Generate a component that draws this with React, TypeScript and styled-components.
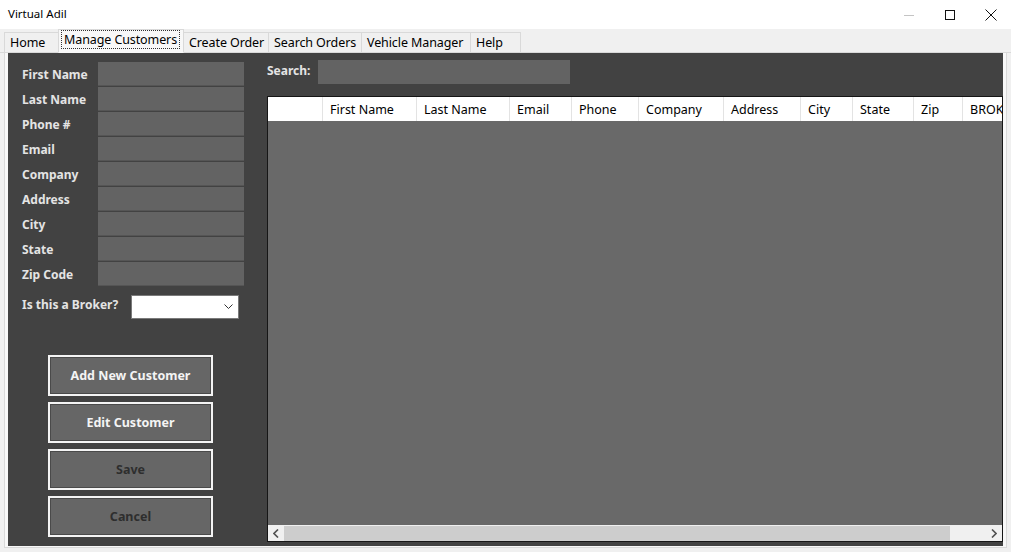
import React from "react";
import styled, { createGlobalStyle } from "styled-components";

const Global = createGlobalStyle`
  html, body { margin: 0; padding: 0; background: #f0f0f0; }
  body { font-family: "Noto Sans", "Open Sans", sans-serif; }
  * { box-sizing: border-box; }
`;

const Window = styled.div`
  width: 1011px;
  height: 552px;
  display: flex;
  flex-direction: column;
  background: #f0f0f0;
  overflow: hidden;
`;

const TitleBar = styled.div`
  height: 29px;
  flex: none;
  background: #ffffff;
  display: flex;
  align-items: center;
  padding-left: 8px;
`;

const Title = styled.div`
  font-size: 11.5px;
  color: #000;
  flex: 1;
  margin-top: -2px;
`;

const Ctrl = styled.div`
  width: 41px;
  height: 29px;
  display: flex;
  align-items: center;
  justify-content: center;
`;

const TabStrip = styled.div`
  height: 24px;
  flex: none;
  display: flex;
  align-items: flex-end;
  padding-left: 5px;
  border-bottom: 1px solid #d9d9d9;
`;

const Tab = styled.div<{ $active?: boolean; $w: number }>`
  width: ${(p) => p.$w}px;
  flex: none;
  height: ${(p) => (p.$active ? 24 : 21)}px;
  margin-bottom: -1px;
  background: ${(p) => (p.$active ? "#f8f8f8" : "#f0f0f0")};
  border: 1px solid #d9d9d9;
  border-bottom: ${(p) => (p.$active ? "1px solid #f8f8f8" : "1px solid #d9d9d9")};
  margin-left: -1px;
  font-size: 12.5px;
  letter-spacing: -0.1px;
  white-space: nowrap;
  overflow: hidden;
  color: #000;
  display: flex;
  align-items: center;
  padding-left: ${(p) => (p.$active ? 2 : 5)}px;
  position: relative;
  z-index: ${(p) => (p.$active ? 1 : 0)};
`;

const Focus = styled.span`
  border: 1px dotted #333;
  padding: 0 2px;
  line-height: 17px;
  margin-top: -3px;
`;

const TabPage = styled.div`
  flex: 1;
  min-height: 0;
  margin: 0 4px 4px 4px;
  border: 1px solid #d9d9d9;
  border-top: none;
  background: #f8f8f8;
  padding: 0 3px 1px 3px;
  display: flex;
`;

const Dark = styled.div`
  flex: 1;
  min-width: 0;
  background: #424242;
  display: flex;
`;

const LeftPanel = styled.div`
  width: 250px;
  flex: none;
  padding: 9px 0 0 14px;
  display: flex;
  flex-direction: column;
`;

const FieldRow = styled.div`
  display: flex;
  align-items: center;
  height: 25px;
`;

const Label = styled.div<{ $w?: number }>`
  width: ${(p) => p.$w ?? 76}px;
  flex: none;
  font-size: 12px;
  font-weight: 700;
  color: #e4e4e4;
  white-space: nowrap;
`;

const TextBox = styled.div`
  width: 146px;
  height: 24px;
  background: #636363;
  border-bottom: 1px solid #555;
  align-self: flex-start;
`;

const BrokerRow = styled.div`
  display: flex;
  align-items: flex-start;
  margin-top: 8px;
`;

const BrokerLabel = styled(Label)`
  padding-top: 1px;
  line-height: 17px;
`;

const Combo = styled.div`
  width: 108px;
  height: 24px;
  background: #fff;
  border: 1px solid #7a7a7a;
  display: flex;
  align-items: center;
  justify-content: flex-end;
  padding-right: 5px;
`;

const Buttons = styled.div`
  margin: 36px 0 0 26px;
  display: flex;
  flex-direction: column;
  gap: 6px;
`;

const Btn = styled.div<{ $disabled?: boolean }>`
  width: 165px;
  height: 41px;
  background: #666666;
  border: 2px solid #f4f4f4;
  box-shadow: inset 0 0 0 1px #4a4a4a;
  display: flex;
  align-items: center;
  justify-content: center;
  font-size: 12.5px;
  font-weight: 700;
  color: ${(p) => (p.$disabled ? "#2e2e2e" : "#f4f4f4")};
`;

const RightPanel = styled.div`
  flex: 1;
  min-width: 0;
  padding: 7px 0 4px 9px;
  display: flex;
  flex-direction: column;
`;

const SearchRow = styled.div`
  display: flex;
  align-items: center;
  height: 24px;
`;

const SearchLabel = styled.div`
  width: 51px;
  font-size: 12px;
  font-weight: 700;
  color: #e4e4e4;
  margin-top: -3px;
`;

const SearchBox = styled.div`
  width: 252px;
  height: 24px;
  background: #636363;
`;

const Grid = styled.div`
  margin-top: 12px;
  flex: 1;
  min-width: 0;
  border: 1px solid #161616;
  background: #696969;
  display: flex;
  flex-direction: column;
  overflow: hidden;
`;

const HeaderRow = styled.div`
  height: 24px;
  flex: none;
  background: #fff;
  display: flex;
  overflow: hidden;
`;

const HeadCell = styled.div<{ $w: number; $first?: boolean }>`
  width: ${(p) => p.$w}px;
  flex: none;
  border-left: ${(p) => (p.$first ? "none" : "1px solid #e3e3e3")};
  font-size: 12.5px;
  color: #000;
  display: flex;
  align-items: center;
  padding-left: 7px;
  white-space: nowrap;
`;

const Body = styled.div`
  flex: 1;
`;

const HScroll = styled.div`
  height: 16px;
  flex: none;
  background: #f0f0f0;
  display: flex;
  border-top: 1px solid #f0f0f0;
`;

const ArrowBtn = styled.div`
  width: 16px;
  display: flex;
  align-items: center;
  justify-content: center;
`;

const Thumb = styled.div`
  width: 666px;
  background: #cdcdcd;
`;

const Track = styled.div`
  flex: 1;
`;

const fields = ["First Name", "Last Name", "Phone #", "Email", "Company", "Address", "City", "State", "Zip Code"];

const cols: [string, number][] = [
  ["", 54],
  ["First Name", 94],
  ["Last Name", 93],
  ["Email", 62],
  ["Phone", 67],
  ["Company", 85],
  ["Address", 77],
  ["City", 52],
  ["State", 61],
  ["Zip", 49],
  ["BROKER", 80],
];

const tabs: [string, number][] = [
  ["Home", 55],
  ["Manage Customers", 126],
  ["Create Order", 86],
  ["Search Orders", 94],
  ["Vehicle Manager", 110],
  ["Help", 51],
];

export default function App() {
  return (
    <>
      <Global />
      <Window>
        <TitleBar>
          <Title>Virtual Adil</Title>
          <Ctrl>
            <svg width="12" height="12" viewBox="0 0 12 12">
              <line x1="1" y1="6.5" x2="11" y2="6.5" stroke="#c4c4c4" strokeWidth="1" />
            </svg>
          </Ctrl>
          <Ctrl>
            <svg width="12" height="12" viewBox="0 0 12 12">
              <rect x="1.5" y="1.5" width="9" height="9" fill="none" stroke="#111" strokeWidth="1" />
            </svg>
          </Ctrl>
          <Ctrl>
            <svg width="12" height="12" viewBox="0 0 12 12">
              <path d="M0.5 0.5 L11.5 11.5 M11.5 0.5 L0.5 11.5" stroke="#111" strokeWidth="1" />
            </svg>
          </Ctrl>
        </TitleBar>
        <TabStrip>
          {tabs.map(([t, w]) => (
            <Tab key={t} $w={w} $active={t === "Manage Customers"}>
              {t === "Manage Customers" ? <Focus>{t}</Focus> : t}
            </Tab>
          ))}
        </TabStrip>
        <TabPage>
          <Dark>
            <LeftPanel>
              {fields.map((f) => (
                <FieldRow key={f}>
                  <Label>{f}</Label>
                  <TextBox />
                </FieldRow>
              ))}
              <BrokerRow>
                <BrokerLabel $w={109}>Is this a Broker?</BrokerLabel>
                <Combo>
                  <svg width="9" height="6" viewBox="0 0 9 6">
                    <path d="M0.5 0.5 L4.5 4.5 L8.5 0.5" fill="none" stroke="#333" strokeWidth="1" />
                  </svg>
                </Combo>
              </BrokerRow>
              <Buttons>
                <Btn>Add New Customer</Btn>
                <Btn>Edit Customer</Btn>
                <Btn $disabled>Save</Btn>
                <Btn $disabled>Cancel</Btn>
              </Buttons>
            </LeftPanel>
            <RightPanel>
              <SearchRow>
                <SearchLabel>Search:</SearchLabel>
                <SearchBox />
              </SearchRow>
              <Grid>
                <HeaderRow>
                  {cols.map(([c, w], i) => (
                    <HeadCell key={i} $w={w} $first={i === 0}>
                      {c}
                    </HeadCell>
                  ))}
                </HeaderRow>
                <Body />
                <HScroll>
                  <ArrowBtn>
                    <svg width="6" height="9" viewBox="0 0 6 9">
                      <path d="M5 0.5 L1 4.5 L5 8.5" fill="none" stroke="#505050" strokeWidth="1.6" />
                    </svg>
                  </ArrowBtn>
                  <Thumb />
                  <Track />
                  <ArrowBtn>
                    <svg width="6" height="9" viewBox="0 0 6 9">
                      <path d="M1 0.5 L5 4.5 L1 8.5" fill="none" stroke="#505050" strokeWidth="1.6" />
                    </svg>
                  </ArrowBtn>
                </HScroll>
              </Grid>
            </RightPanel>
          </Dark>
        </TabPage>
      </Window>
    </>
  );
}
